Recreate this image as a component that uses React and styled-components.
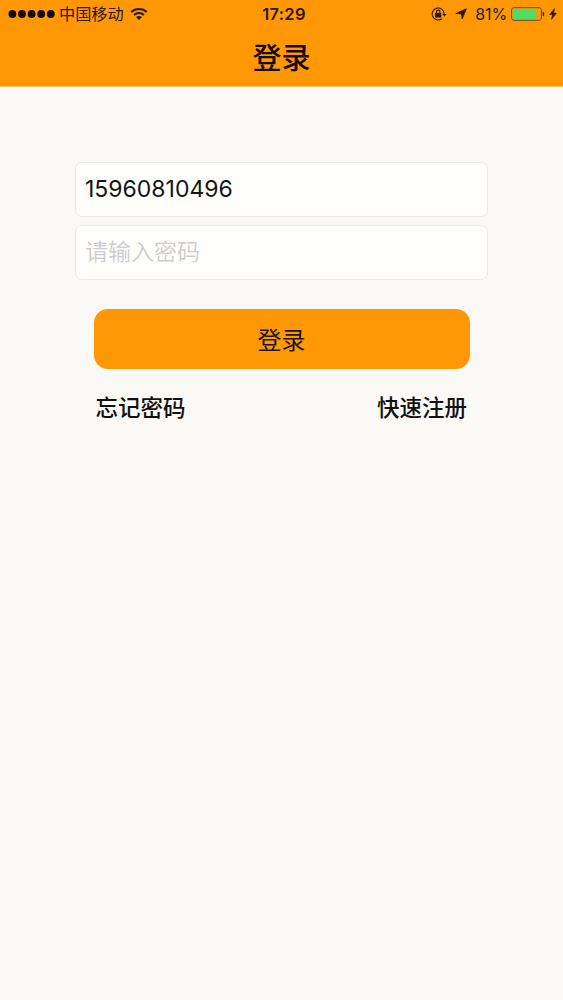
import React, { useState } from 'react';
import styled, { createGlobalStyle } from 'styled-components';

const GlobalStyle = createGlobalStyle`
    * {
        box-sizing: border-box;
    }
    body {
        margin: 0;
        background: #faf9f6;
        color: #161109;
        font-family: Inter, "Noto Sans CJK SC", sans-serif;
    }
`;

const Page = styled.div`
    display: flex;
    flex-direction: column;
    min-height: 1000px;
    background: #faf9f6;
`;

const Header = styled.header`
    height: 87px;
    background: #ff9804;
    border-bottom: 1px solid #fbc169;
`;

const StatusBar = styled.div`
    display: grid;
    grid-template-columns: 1fr auto 1fr;
    align-items: center;
    height: 28px;
    padding: 0 6px 0 8px;
    color: #2b1a05;
`;

const StatusGroup = styled.div`
    display: flex;
    align-items: center;
    justify-content: ${({ $end }) => ($end ? 'flex-end' : 'flex-start')};
`;

const Signal = styled.svg`
    width: 47px;
    height: 10px;
    margin-right: 4px;
`;

const Carrier = styled.span`
    font-size: 16.2px;
    line-height: 28px;
    margin-right: 6px;
`;

const Clock = styled.span`
    padding-left: 3px;
    font-size: 16.5px;
    font-weight: 600;
    letter-spacing: 0.3px;
    line-height: 28px;
`;

const Percent = styled.span`
    font-size: 16px;
    line-height: 28px;
    letter-spacing: -0.1px;
    margin: 0 4px 0 8px;
`;

const Title = styled.h1`
    margin: 0;
    padding-top: 2px;
    font-size: 29px;
    font-weight: 500;
    line-height: 58px;
    text-align: center;
    color: #140b02;
`;

const Form = styled.form`
    display: flex;
    flex-direction: column;
    width: 413px;
    margin: 75px 0 0 75px;
`;

const Field = styled.input`
    width: 100%;
    height: 54.5px;
    margin-bottom: 8.5px;
    padding: ${({ $padding }) => $padding};
    border: 1px solid #ebeae8;
    border-radius: 7px;
    outline: none;
    background: #fefefd;
    color: #151515;
    font-family: inherit;
    font-size: 23px;
    &::placeholder {
        color: #cfcccd;
        font-weight: 350;
        opacity: 1;
    }
`;

const Submit = styled.button`
    height: 60px;
    margin: 21px 18.5px 0;
    padding: 0 0 2px;
    border: none;
    border-radius: 14px;
    background: #ff9804;
    color: #21160a;
    font-family: inherit;
    font-size: 24px;
`;

const Links = styled.div`
    display: flex;
    justify-content: space-between;
    margin: 22px 21px 0 20.5px;
`;

const TextLink = styled.a`
    font-size: 22.5px;
    font-weight: 500;
    line-height: 34px;
    color: #111;
`;

const WifiIcon = () => (
    <svg width="18" height="14" viewBox="0 0 18 14" fill="none" stroke="currentColor" strokeWidth="2.1">
        <path d="M1.2 5.1C5.4 1 12.6 1 16.8 5.1" />
        <path d="M4.1 8C6.8 5.4 11.2 5.4 13.9 8" />
        <path d="M9 13L6 10C7.8 8.5 10.2 8.5 12 10Z" fill="currentColor" stroke="none" />
    </svg>
);

const RotationLockIcon = () => (
    <svg width="16" height="15" viewBox="0 0 16 15" fill="none" stroke="currentColor">
        <path d="M13.2 7A6 6 0 1 0 10.8 11.8" strokeWidth="1.1" />
        <path d="M11.2 6.9H15.6L13.4 9.6Z" fill="currentColor" stroke="none" />
        <rect x="4.1" y="6" width="6.2" height="4.6" rx="0.5" fill="currentColor" stroke="none" />
        <path d="M5.5 6.5V4.9A1.7 1.7 0 0 1 8.9 4.9V6.5" strokeWidth="1.2" />
    </svg>
);

const LocationIcon = styled(({ className }) => (
    <svg className={className} width="12" height="12" viewBox="0 0 12 12" fill="currentColor">
        <path
            d="M11.4 0.8L7.2 11L6.4 5.9L0.8 5.5Z"
            stroke="currentColor"
            strokeWidth="0.8"
            strokeLinejoin="round"
        />
    </svg>
))`
    margin-left: 8px;
`;

const BatteryIcon = () => (
    <svg width="34" height="14" viewBox="0 0 34 14">
        <rect x="0.6" y="0.7" width="29.8" height="12.6" rx="2.2" fill="none" stroke="#6e4a12" strokeWidth="1" />
        <rect x="1.6" y="1.7" width="23.6" height="10.6" rx="1" fill="#4fdb65" />
        <path d="M31.6 4.5V9.5C33.9 8.8 33.9 5.2 31.6 4.5Z" fill="#3b260a" />
    </svg>
);

const BoltIcon = styled(({ className }) => (
    <svg className={className} width="8" height="12" viewBox="0 0 8 12" fill="currentColor">
        <path
            d="M5.5 0.6L0.6 6.6H3.6L2.4 11.4L7.5 5.1H4.6Z"
            stroke="currentColor"
            strokeWidth="0.6"
            strokeLinejoin="round"
        />
    </svg>
))`
    margin-left: 4px;
`;

const App = () => {
    const [phone, setPhone] = useState('15960810496');
    const [password, setPassword] = useState('');

    return (
        <Page>
            <GlobalStyle />
            <Header>
                <StatusBar>
                    <StatusGroup>
                        <Signal viewBox="0 0 47 10" fill="#140b02">
                            {[0, 1, 2, 3, 4].map((dot) => (
                                <circle key={dot} cx={4.4 + dot * 9.6} cy="5" r="3.9" />
                            ))}
                        </Signal>
                        <Carrier>中国移动</Carrier>
                        <WifiIcon />
                    </StatusGroup>
                    <Clock>17:29</Clock>
                    <StatusGroup $end>
                        <RotationLockIcon />
                        <LocationIcon />
                        <Percent>81%</Percent>
                        <BatteryIcon />
                        <BoltIcon />
                    </StatusGroup>
                </StatusBar>
                <Title>登录</Title>
            </Header>

            <Form onSubmit={(event) => event.preventDefault()}>
                <Field
                    $padding="0 9px 1px"
                    type="text"
                    value={phone}
                    onChange={(event) => setPhone(event.target.value)}
                />
                <Field
                    $padding="0 9px"
                    type="password"
                    placeholder="请输入密码"
                    value={password}
                    onChange={(event) => setPassword(event.target.value)}
                />
                <Submit type="submit">登录</Submit>
                <Links>
                    <TextLink>忘记密码</TextLink>
                    <TextLink>快速注册</TextLink>
                </Links>
            </Form>
        </Page>
    );
};

export default App;
